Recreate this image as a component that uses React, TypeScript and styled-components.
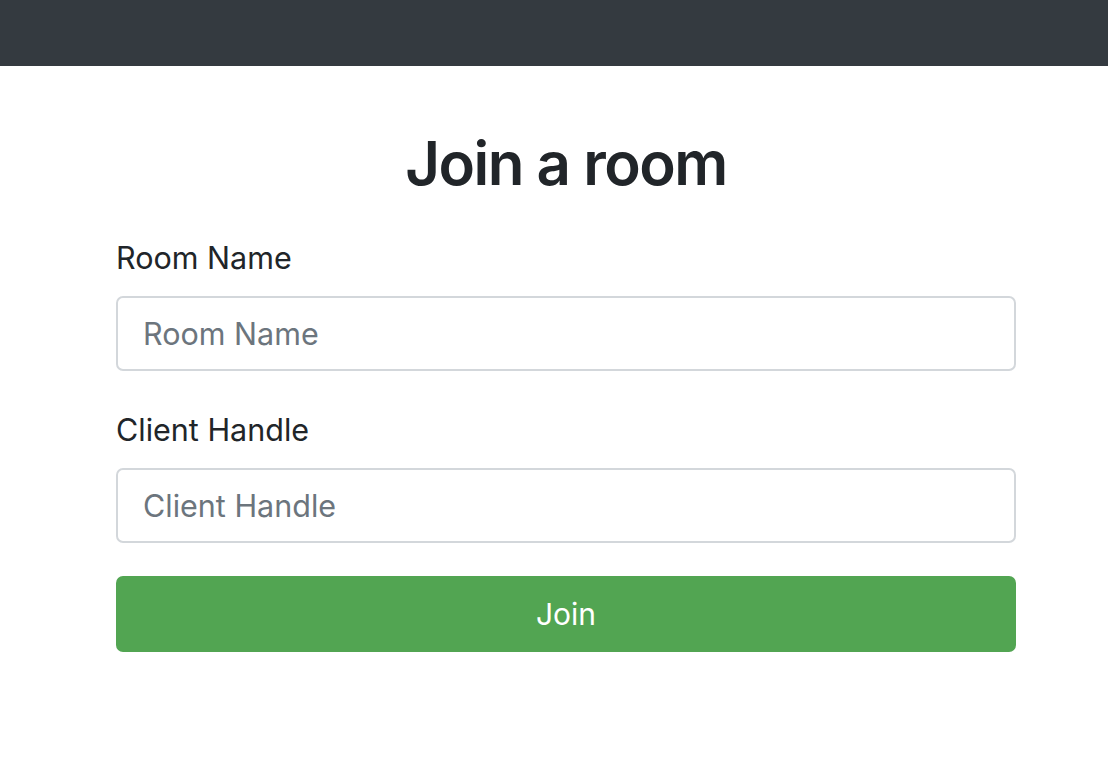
import React from 'react'
import styled, { createGlobalStyle } from 'styled-components'

const GlobalStyle = createGlobalStyle`
  html, body {
    margin: 0;
    padding: 0;
    background: #fff;
  }
  body {
    font-family: Inter, 'Noto Sans', 'Liberation Sans', sans-serif;
    color: #212529;
  }
  * {
    box-sizing: border-box;
  }
`

const NavBar = styled.nav`
  height: 66px;
  background: #343a40;
`

const Container = styled.main`
  width: 900px;
  margin-left: 116px;
  padding-top: 61px;
`

const Title = styled.h1`
  margin: 0 0 39px 0;
  font-size: 60px;
  font-weight: 600;
  line-height: 72px;
  text-align: center;
  letter-spacing: -1.5px;
`

const Form = styled.form`
  display: flex;
  flex-direction: column;
`

const Field = styled.div<{ $gap: number }>`
  display: flex;
  flex-direction: column;
  margin-bottom: ${(p) => p.$gap}px;
`

const Label = styled.label`
  font-size: 30.5px;
  line-height: 39px;
  margin-bottom: 19px;
`

const Input = styled.input`
  height: 75px;
  width: 100%;
  padding: 0 25px;
  font-family: inherit;
  font-size: 30.5px;
  color: #495057;
  border: 2px solid #d3d7db;
  border-radius: 7px;
  outline: none;
  &::placeholder {
    color: #6c757d;
  }
`

const Button = styled.button`
  height: 76px;
  width: 100%;
  border: none;
  border-radius: 7px;
  background: #52a552;
  color: #fff;
  font-family: inherit;
  font-size: 30px;
  cursor: pointer;
`

const App: React.FC = () => {
  return (
    <>
      <GlobalStyle />
      <NavBar />
      <Container>
        <Title>Join a room</Title>
        <Form onSubmit={(e) => e.preventDefault()}>
          <Field $gap={39}>
            <Label htmlFor='room'>Room Name</Label>
            <Input id='room' placeholder='Room Name' />
          </Field>
          <Field $gap={33}>
            <Label htmlFor='handle'>Client Handle</Label>
            <Input id='handle' placeholder='Client Handle' />
          </Field>
          <Button type='submit'>Join</Button>
        </Form>
      </Container>
    </>
  )
}

export default App
